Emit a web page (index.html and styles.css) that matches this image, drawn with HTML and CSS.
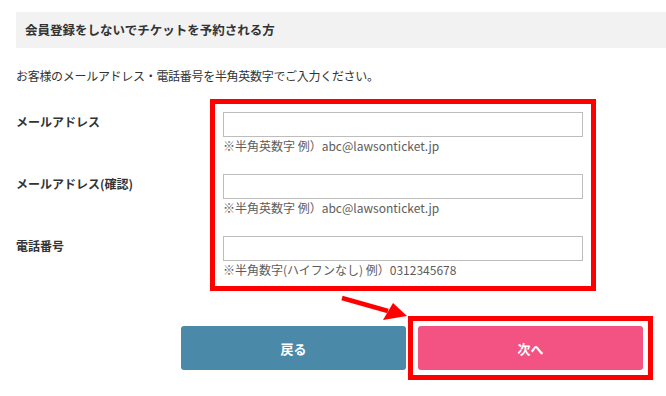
FILE: index.html
```html
<!DOCTYPE html>
<html lang="ja">
<head>
    <meta charset="UTF-8">
    <meta name="viewport" content="width=device-width, initial-scale=1.0">
    <title>会員登録をしないでチケットを予約される方</title>
    <link rel="stylesheet" href="styles.css">
</head>
<body>

    <div class="page">
        <h2 class="section-title">会員登録をしないでチケットを予約される方</h2>
        <p class="lead">お客様のメールアドレス・電話番号を半角英数字でご入力ください。</p>

        <div class="form">
            <div class="labels">
                <div class="label">メールアドレス</div>
                <div class="label">メールアドレス(確認)</div>
                <div class="label">電話番号</div>
            </div>

            <div class="fields highlight">
                <div class="field">
                    <input type="text" class="text-input">
                    <div class="hint">※半角英数字 例）abc@lawsonticket.jp</div>
                </div>
                <div class="field">
                    <input type="text" class="text-input">
                    <div class="hint">※半角英数字 例）abc@lawsonticket.jp</div>
                </div>
                <div class="field">
                    <input type="text" class="text-input">
                    <div class="hint">※半角数字(ハイフンなし) 例）0312345678</div>
                </div>
            </div>
        </div>

        <div class="actions">
            <svg class="arrow" width="76" height="32" viewBox="0 0 76 32">
                <line x1="6" y1="7" x2="52" y2="20" stroke="#ff0000" stroke-width="4.5"/>
                <polygon points="71,25 57,12 47,29" fill="#ff0000"/>
            </svg>
            <button class="btn back">戻る</button>
            <div class="highlight btn-frame">
                <button class="btn next">次へ</button>
            </div>
        </div>
    </div>

</body>
</html>
```

FILE: styles.css
```css
body {
    margin: 0;
    background: #fff;
    color: #333;
    font-family: "Noto Sans CJK JP", "Noto Sans", sans-serif;
    font-size: 12px;
}
.page { padding: 12px 0 0 16px; }

.section-title {
    margin: 0;
    height: 36px;
    line-height: 36px;
    padding-left: 9px;
    background: #f2f2f2;
    font-size: 12.5px;
    font-weight: bold;
    color: #333;
}
.lead {
    margin: 19px 0 0;
    line-height: 18px;
    letter-spacing: -0.3px;
}

.form {
    display: flex;
    align-items: flex-start;
    margin-top: 14px;
}
.labels {
    width: 194px;
    padding-top: 13px;
}
.label {
    height: 62px;
    line-height: 20px;
    font-weight: bold;
}
.label:last-child { height: auto; }

/* red annotation frame */
.highlight { border: 5px solid #ff0000; }

.fields {
    width: 360px;
    padding: 8px 8px 7px;
}
.field { margin-bottom: 19px; }
.field:last-child { margin-bottom: 0; }
.text-input {
    display: block;
    box-sizing: border-box;
    width: 360px;
    height: 25px;
    margin: 0;
    border: 1px solid #bdbdbd;
    border-radius: 0;
    background: #fff;
}
.hint {
    line-height: 18px;
    color: #5c5c5c;
}

.actions {
    position: relative;
    display: flex;
    align-items: center;
    margin-top: 25px;
    padding-left: 165px;
}
.arrow {
    position: absolute;
    left: 320px;
    top: -25px;
}
.btn {
    width: 225px;
    height: 44px;
    border: none;
    border-radius: 3px;
    color: #fff;
    font-family: inherit;
    font-size: 13px;
    font-weight: bold;
    cursor: pointer;
}
.back {
    background: #4a8aa8;
    margin-right: 2px;
}
.btn-frame { padding: 5px; }
.next {
    display: block;
    background: #f25383;
}
```
